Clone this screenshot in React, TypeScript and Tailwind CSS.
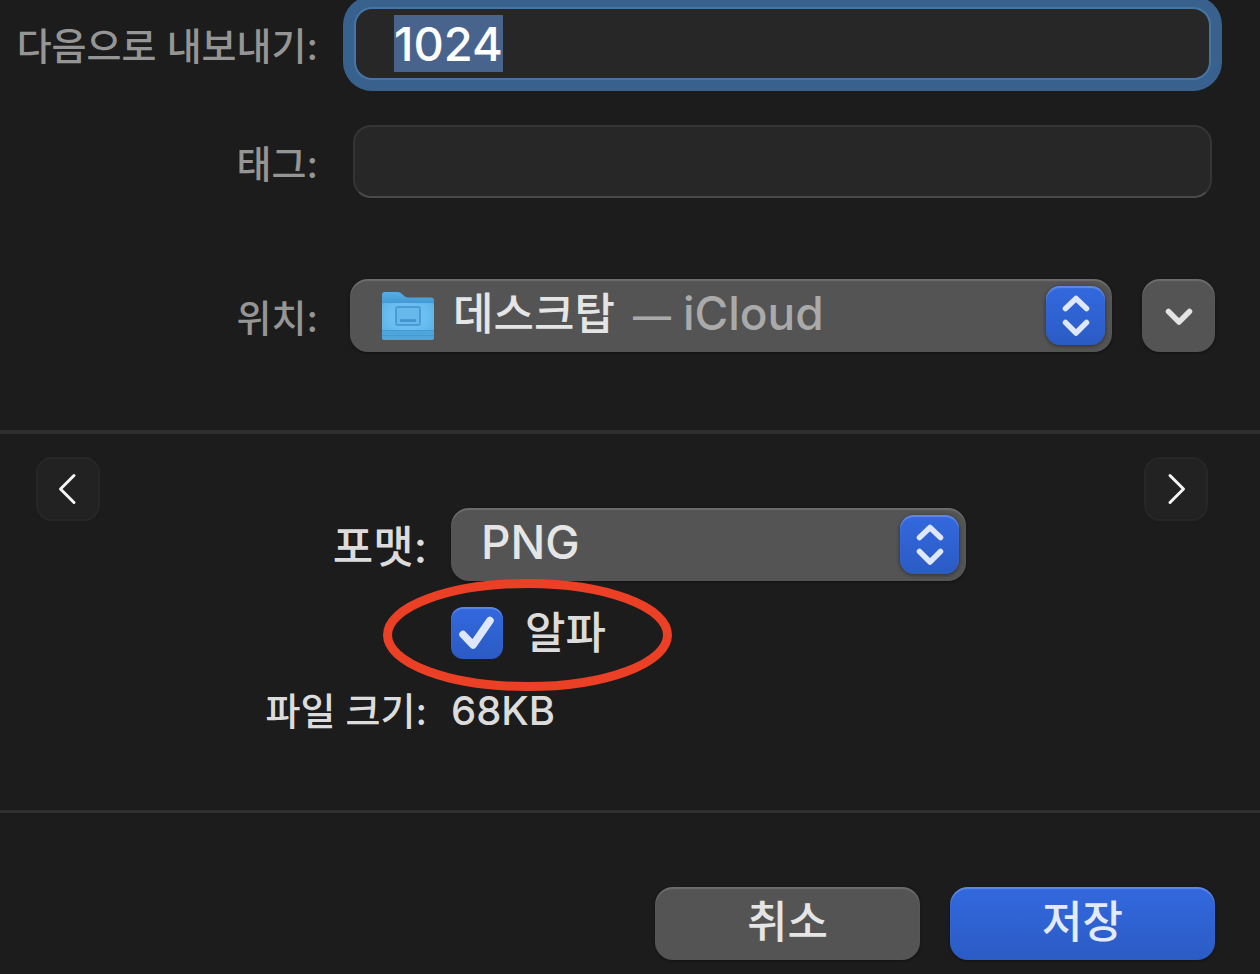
import { useEffect, useRef, useState } from "react";
import type { ReactNode } from "react";

const FONT = "font-[Inter,'Noto_Sans_CJK_KR',sans-serif]";

/** Blue up/down badge at the right end of a pop-up button. */
function Stepper() {
  return (
    <span
      aria-hidden
      className="pointer-events-none absolute top-[7px] right-[7px] flex size-[59px] items-center justify-center rounded-[14px] bg-linear-to-b from-[#3369df] to-[#2b5bc4] shadow-[0_1px_4px_rgba(0,0,0,0.45),inset_0_2px_1px_rgba(255,255,255,0.22)]"
    >
      <svg width="30" height="46" viewBox="0 0 30 46" fill="none" stroke="#dfe7fa" strokeWidth="5.5" strokeLinecap="round" strokeLinejoin="round">
        <path d="M4.5 15.5L15 5.500L25.5 15.5" />
        <path d="M4.5 29.5L15 40L25.5 29.5" />
      </svg>
    </span>
  );
}

function DesktopFolder() {
  return (
    <svg width="54" height="52" viewBox="0 0 54 52" aria-hidden className="shrink-0">
      <defs>
        <linearGradient id="folder-back" x1="0" y1="0" x2="0" y2="1">
          <stop offset="0" stopColor="#56aee3" />
          <stop offset="0.35" stopColor="#3a8fcb" />
        </linearGradient>
        <radialGradient id="folder-front" cx="0.5" cy="0.35" r="0.75">
          <stop offset="0" stopColor="#7ccbfa" />
          <stop offset="1" stopColor="#55aee6" />
        </radialGradient>
      </defs>
      <path d="M1 50V5Q1 2 4 2H17Q19 2 21 4L24 6.500Q25 7.500 27 7.500H50Q53 7.500 53 10.500V47Q53 50 50 50H4Q1 50 1 47Z" fill="url(#folder-back)" />
      <path d="M1 15Q1 13 3 13H51Q53 13 53 15V47Q53 50 50 50H4Q1 50 1 47Z" fill="url(#folder-front)" />
      <path d="M1 40H53V47Q53 50 50 50H4Q1 50 1 47Z" fill="#4da5dc" />
      <path d="M1 40.500H53M1 45.500H53" stroke="#3f93cb" strokeOpacity="0.6" />
      <rect x="15" y="17" width="24" height="18" rx="2" fill="#67b9ec" stroke="#4a9dd4" strokeWidth="2" />
      <path d="M19 30.500H35" stroke="#3f8fca" strokeWidth="2.500" />
    </svg>
  );
}

interface FieldRowProps {
  id: string;
  label: string;
  gap: string;
  children: ReactNode;
}

function FieldRow({ id, label, gap, children }: FieldRowProps) {
  return (
    <div className={`flex items-center ${gap}`}>
      <label htmlFor={id} className="w-[318px] shrink-0 pt-1 text-right text-[38px] leading-[56px] font-medium whitespace-nowrap text-[#959595]">
        {label}
      </label>
      {children}
    </div>
  );
}

function NavButton({ label, d }: { label: string; d: string }) {
  return (
    <button
      type="button"
      aria-label={label}
      className="flex size-16 shrink-0 items-center justify-center rounded-2xl border-2 border-[#272727] bg-[#222222]"
    >
      <svg width="32" height="32" viewBox="0 0 32 32" fill="none" stroke="#f5f5f5" strokeWidth="3" strokeLinecap="round" strokeLinejoin="round" aria-hidden>
        <path d={d} />
      </svg>
    </button>
  );
}

export default function App() {
  const [name, setName] = useState("1024");
  const [tags, setTags] = useState("");
  const [alpha, setAlpha] = useState(true);
  const nameRef = useRef<HTMLInputElement>(null);

  // The file name starts out focused and selected.
  useEffect(() => {
    nameRef.current?.focus();
    nameRef.current?.select();
  }, []);

  return (
    <main className={`min-h-screen overflow-hidden bg-[#1c1c1c] ${FONT}`}>
      <section className="flex flex-col pt-[7px] pb-[78px]">
        <FieldRow id="name" label="다음으로 내보내기:" gap="gap-9">
          <input
            id="name"
            ref={nameRef}
            value={name}
            onChange={(e) => setName(e.target.value)}
            className="mr-[49px] h-[73px] min-w-0 flex-1 rounded-[18px] border-2 border-[#4674a3] bg-[#272727] px-[38px] text-[47px] font-medium text-white shadow-[0_0_0_11px_#38628d] outline-none selection:bg-[#48648c] selection:text-white"
          />
        </FieldRow>
        <div className="mt-[45px]">
          <FieldRow id="tags" label="태그:" gap="gap-[35px]">
            <input
              id="tags"
              value={tags}
              onChange={(e) => setTags(e.target.value)}
              className="mr-12 h-[73px] min-w-0 flex-1 rounded-[18px] border-2 border-[#353535] border-b-[#4a4a4a] bg-[#272727] px-[38px] text-[47px] text-white outline-none"
            />
          </FieldRow>
        </div>
        <div className="mt-[81px]">
          <FieldRow id="location" label="위치:" gap="gap-8">
            <div className="relative h-[73px] min-w-0 flex-1 rounded-[18px] bg-[#545454] shadow-[0_1px_3px_rgba(0,0,0,0.4),inset_0_2px_1px_rgba(255,255,255,0.15)]">
              <select id="location" className="absolute inset-0 size-full appearance-none rounded-[18px] opacity-0">
                <option>데스크탑 — iCloud</option>
              </select>
              <div aria-hidden className="pointer-events-none flex h-full items-center pl-[31px]">
                <DesktopFolder />
                <span className="flex items-baseline pb-1 pl-[18px] text-[44px] font-medium whitespace-nowrap text-[#e5e5e5]">
                  데스크탑
                  <span className="pr-3 pl-[18px] text-[38px] text-[#aaaaaa]">—</span>
                  <span className="text-[46px] text-[#aaaaaa]">iCloud</span>
                </span>
              </div>
              <Stepper />
            </div>
            <button
              type="button"
              aria-label="위치 펼치기"
              className="mr-[45px] -ml-[2px] flex size-[73px] shrink-0 items-center justify-center rounded-[18px] bg-[#545454] shadow-[0_1px_3px_rgba(0,0,0,0.4),inset_0_2px_1px_rgba(255,255,255,0.15)]"
            >
              <svg width="30" height="24" viewBox="0 0 30 24" fill="none" stroke="#e3e3e3" strokeWidth="5.5" strokeLinecap="round" strokeLinejoin="round" aria-hidden>
                <path d="M4.500 7.500L15 18L25.500 7.500" />
              </svg>
            </button>
          </FieldRow>
        </div>
      </section>

      <hr className="h-1 border-0 bg-[#303030]" />

      <section className="flex items-start pt-[23px] pr-[52px] pb-[69px] pl-9">
        <NavButton label="이전" d="M22 2.500L8.500 16L22 29.500" />
        <div className="grid min-w-0 flex-1 grid-cols-[327px_1fr] items-center gap-x-6 pt-[51px] text-[#dcdcdc]">
          <label htmlFor="format" className="pt-1 text-right text-[44px] leading-[64px] font-medium">
            포맷:
          </label>
          <div className="relative h-[73px] w-[515px]">
            <select
              id="format"
              className="size-full appearance-none rounded-[18px] bg-[#545454] pb-1 pl-[30px] text-[46px] font-medium text-[#e5e5e5] shadow-[0_1px_3px_rgba(0,0,0,0.4),inset_0_2px_1px_rgba(255,255,255,0.15)] outline-none"
            >
              <option>PNG</option>
            </select>
            <Stepper />
          </div>

          <div className="relative col-start-2 mt-[26px] flex h-[52px] w-fit items-center gap-[22px]">
            <span className="relative size-[52px]">
              <input
                id="alpha"
                type="checkbox"
                checked={alpha}
                onChange={(e) => setAlpha(e.target.checked)}
                className="block size-full appearance-none rounded-[12px] bg-[#545454] shadow-[inset_0_2px_1px_rgba(255,255,255,0.2)] checked:bg-linear-to-b checked:from-[#3369df] checked:to-[#2b5bc4]"
              />
              {alpha && (
                <svg viewBox="0 0 52 52" fill="none" stroke="#dfe7fa" strokeWidth="7.5" strokeLinecap="round" strokeLinejoin="round" aria-hidden className="pointer-events-none absolute inset-0">
                  <path d="M12 27.500L22 38L39 13.500" />
                </svg>
              )}
            </span>
            <label htmlFor="alpha" className="text-[44px] leading-[52px] font-medium">
              알파
            </label>
            {/* Hand-drawn style callout round the option */}
            <svg width="292" height="116" viewBox="0 0 292 116" fill="none" aria-hidden className="pointer-events-none absolute -top-[30px] -left-[69px] max-w-none">
              <ellipse cx="145.500" cy="58" rx="140" ry="51.500" stroke="#eb4025" strokeWidth="9" />
            </svg>
          </div>

          <span className="mt-[22px] text-right text-[38px] leading-[60px] font-medium whitespace-nowrap">파일 크기:</span>
          <span className="mt-[22px] text-[40px] leading-[60px] font-medium">68KB</span>
        </div>
        <NavButton label="다음" d="M10 2.500L23.500 16L10 29.500" />
      </section>

      <hr className="h-[3px] border-0 bg-[#303030]" />

      <footer className="flex justify-end gap-[30px] pt-[74px] pr-[45px] pb-[14px] text-[44px] leading-[64px] font-medium">
        <button type="button" className="h-[73px] w-[265px] rounded-[18px] bg-[#545454] pb-1 text-[#e5e5e5] shadow-[0_1px_3px_rgba(0,0,0,0.4),inset_0_2px_1px_rgba(255,255,255,0.15)]">
          취소
        </button>
        <button type="button" className="h-[73px] w-[265px] rounded-[18px] bg-linear-to-b from-[#3369df] to-[#2b5bc4] pb-1 text-[#e3eafc] shadow-[0_1px_3px_rgba(0,0,0,0.4),inset_0_2px_1px_rgba(255,255,255,0.22)]">
          저장
        </button>
      </footer>
    </main>
  );
}
